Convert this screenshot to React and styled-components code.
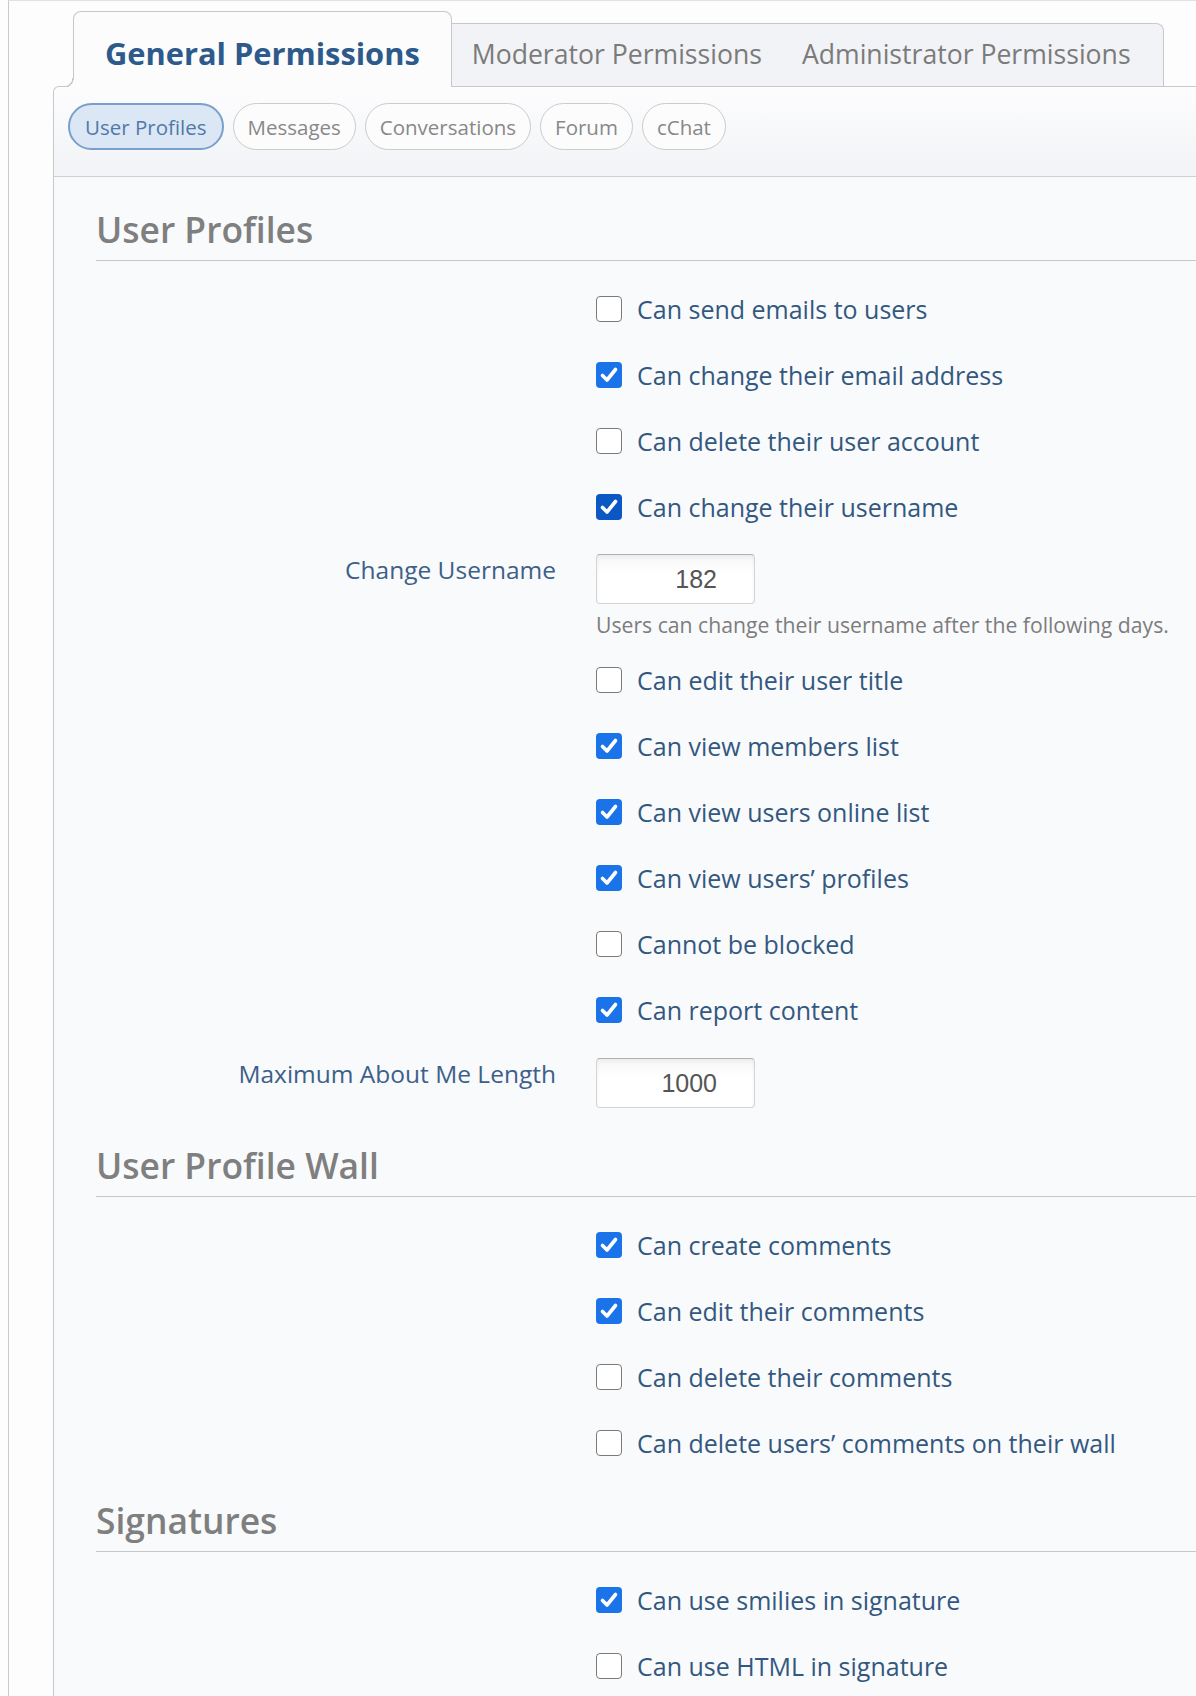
import React from "react";
import styled, { createGlobalStyle } from "styled-components";

const GlobalStyle = createGlobalStyle`
  html, body {
    margin: 0;
    padding: 0;
    background: #fdfdfe;
    overflow: hidden;
  }
  body {
    font-family: "Open Sans", "Noto Sans", sans-serif;
  }
`;

const otherTabs = ["Moderator Permissions", "Administrator Permissions"];
const subTabs = ["User Profiles", "Messages", "Conversations", "Forum", "cChat"];

// gap = space above the row / heading, in px
const sections = [
  {
    title: "User Profiles",
    gap: 30,
    rows: [
      { label: "Can send emails to users", gap: 35 },
      { label: "Can change their email address", checked: true },
      { label: "Can delete their user account" },
      { label: "Can change their username", checked: true, focused: true },
      {
        number: true,
        label: "Change Username",
        value: "182",
        hint: "Users can change their username after the following days.",
        gap: 34,
      },
      { label: "Can edit their user title", gap: 28 },
      { label: "Can view members list", checked: true },
      { label: "Can view users online list", checked: true },
      { label: "Can view users’ profiles", checked: true },
      { label: "Cannot be blocked" },
      { label: "Can report content", checked: true },
      { number: true, label: "Maximum About Me Length", value: "1000", gap: 35 },
    ],
  },
  {
    title: "User Profile Wall",
    gap: 35,
    rows: [
      { label: "Can create comments", checked: true, gap: 35 },
      { label: "Can edit their comments", checked: true },
      { label: "Can delete their comments" },
      { label: "Can delete users’ comments on their wall" },
    ],
  },
  {
    title: "Signatures",
    gap: 42,
    rows: [
      { label: "Can use smilies in signature", checked: true, gap: 35 },
      { label: "Can use HTML in signature" },
    ],
  },
];

const Checkbox = ({ checked, focused }) => (
  <Box $checked={checked} $focused={focused}>
    {checked && (
      <svg width="22" height="22" viewBox="0 0 22 22">
        <path
          d="M4.5 11.5 L9 16 L17.5 5.5"
          fill="none"
          stroke="#fff"
          strokeWidth="3.6"
          strokeLinecap="round"
          strokeLinejoin="round"
        />
      </svg>
    )}
  </Box>
);

const App = () => {
  return (
    <>
      <GlobalStyle />
      <Frame>
        <TabBar>
          <ActiveTab>General Permissions</ActiveTab>
          <TabGroup>
            {otherTabs.map((t) => (
              <Tab key={t}>{t}</Tab>
            ))}
          </TabGroup>
        </TabBar>
        <Panel>
          <SubTabBar>
            {subTabs.map((t, i) => (
              <Pill key={t} $active={i === 0}>
                {t}
              </Pill>
            ))}
          </SubTabBar>
          <PanelBody>
            {sections.map((s) => (
              <section key={s.title}>
                <SectionTitle $gap={s.gap}>{s.title}</SectionTitle>
                {s.rows.map((r) =>
                  r.number ? (
                    <FormRow key={r.label} $gap={r.gap ?? 40}>
                      <RowLabel>{r.label}</RowLabel>
                      <div>
                        <NumberInput type="text" defaultValue={r.value} />
                        {r.hint && <Hint>{r.hint}</Hint>}
                      </div>
                    </FormRow>
                  ) : (
                    <FormRow key={r.label} $gap={r.gap ?? 40}>
                      <span />
                      <CheckLabel>
                        <Checkbox checked={r.checked} focused={r.focused} />
                        {r.label}
                      </CheckLabel>
                    </FormRow>
                  )
                )}
              </section>
            ))}
          </PanelBody>
        </Panel>
      </Frame>
    </>
  );
};

const Frame = styled.div`
  margin-left: 8px;
  height: 100vh;
  box-sizing: border-box;
  border-left: 1px solid #c9c9c9;
  border-top: 1px solid #e2e2e2;
  padding-left: 44px;
  overflow: hidden;
  background: #fdfdfe;
`;

const TabBar = styled.div`
  display: flex;
  align-items: flex-end;
  padding: 10px 0 0 20px;
  position: relative;
  z-index: 1;
`;

const ActiveTab = styled.div`
  position: relative;
  height: 76px;
  margin-bottom: -1px;
  box-sizing: border-box;
  padding: 21px 31px 0 31px;
  border: 1px solid #c8c8c8;
  border-bottom: none;
  border-radius: 8px 8px 0 0;
  background: #fcfcfd;
  font-size: 30.8px;
  font-weight: 700;
  line-height: 40px;
  color: #2d5a8b;
  white-space: nowrap;

  /* concave foot where the tab meets the panel */
  &::before {
    content: "";
    position: absolute;
    left: -10px;
    bottom: 0;
    width: 10px;
    height: 9px;
    background: radial-gradient(
      circle at 0 0,
      transparent 8px,
      #c8c8c8 8.5px,
      #c8c8c8 9.5px,
      #fcfcfd 10px
    );
  }
`;

const TabGroup = styled.div`
  display: flex;
  height: 63px;
  box-sizing: border-box;
  padding: 12px 12px 0 0;
  border-top: 1px solid #c8c8c8;
  border-right: 1px solid #c8c8c8;
  border-top-right-radius: 8px;
  background: #f1f3f6;
`;

const Tab = styled.div`
  padding: 0 20px;
  font-size: 26.6px;
  line-height: 36px;
  color: #7b7b7b;
  white-space: nowrap;
`;

const Panel = styled.div`
  border-left: 1px solid #c8c8c8;
  border-top: 1px solid #c8c8c8;
  border-top-left-radius: 6px;
  background: #f9fafc;
  min-height: 1700px;
`;

const SubTabBar = styled.div`
  display: flex;
  gap: 9px;
  padding: 16px 14px 26px;
  border-bottom: 1px solid #cfcfcf;
  border-top-left-radius: 6px;
  background: linear-gradient(to bottom, #fdfdfe, #f1f3f6);
`;

const Pill = styled.div`
  display: flex;
  align-items: center;
  height: 47px;
  box-sizing: border-box;
  padding: 0 ${({ $active }) => ($active ? "15px" : "14px")};
  border: ${({ $active }) =>
    $active ? "2px solid #7a9fca" : "1px solid #cbcbcb"};
  border-radius: 24px;
  background: ${({ $active }) => ($active ? "#dbe7f4" : "#fcfcfd")};
  color: ${({ $active }) => ($active ? "#5179a8" : "#888888")};
  font-size: 20.5px;
  white-space: nowrap;
`;

const PanelBody = styled.div`
  padding: 0 0 0 42px;
`;

const SectionTitle = styled.h2`
  margin: ${({ $gap }) => $gap}px 0 0;
  padding-bottom: 9px;
  border-bottom: 1px solid #c8c8c8;
  font-size: 35.4px;
  font-weight: 600;
  line-height: 44px;
  color: #7f7f7f;
`;

const FormRow = styled.div`
  display: grid;
  grid-template-columns: 460px 1fr;
  column-gap: 40px;
  margin-top: ${({ $gap }) => $gap}px;
`;

const RowLabel = styled.div`
  text-align: right;
  padding-top: 3px;
  font-size: 24.5px;
  line-height: 26px;
  color: #3d6088;
  white-space: nowrap;
`;

const CheckLabel = styled.label`
  display: flex;
  align-items: center;
  gap: 15px;
  font-size: 25px;
  line-height: 26px;
  color: #33587f;
  white-space: nowrap;
`;

const Box = styled.span`
  display: flex;
  align-items: center;
  justify-content: center;
  flex: none;
  width: 26px;
  height: 26px;
  box-sizing: border-box;
  border-radius: 4px;
  border: ${({ $checked }) => ($checked ? "none" : "1.5px solid #7a7a7a")};
  background: ${({ $checked, $focused }) =>
    !$checked ? "#ffffff" : $focused ? "#0b57c4" : "#1a73e8"};
`;

const NumberInput = styled.input`
  display: block;
  width: 159px;
  height: 50px;
  box-sizing: border-box;
  margin: 0;
  padding: 0 37px 0 8px;
  border: 1px solid #d4d4d4;
  border-top-color: #b0b0b0;
  border-radius: 4px;
  background: linear-gradient(to bottom, #f6f6f6, #ffffff 40%);
  box-shadow: inset 0 2px 4px rgba(0, 0, 0, 0.05);
  text-align: right;
  font-family: "Liberation Sans", Arial, sans-serif;
  font-size: 25px;
  color: #555555;
  outline: none;
`;

const Hint = styled.div`
  margin-top: 7px;
  font-size: 21.2px;
  line-height: 28px;
  color: #7d7d7d;
  white-space: nowrap;
`;

export default App;
